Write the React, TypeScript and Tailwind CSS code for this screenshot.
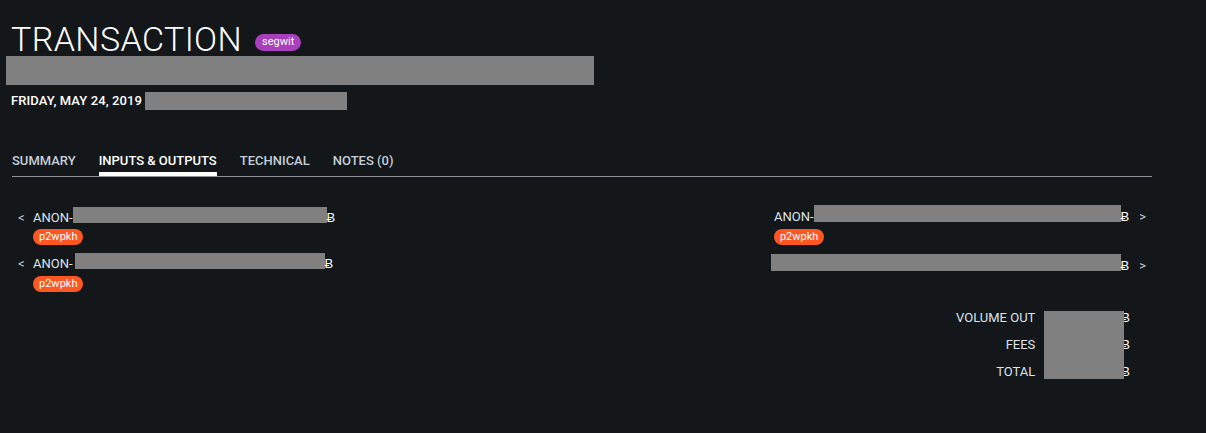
import React from "react";

const font = { fontFamily: "Roboto, 'Liberation Sans', sans-serif" };

function Redacted({ className }: { className: string }) {
  return <div className={`bg-[#808080] shrink-0 ${className}`} />;
}

function Badge({ label, color }: { label: string; color: string }) {
  return (
    <span
      className={`inline-flex h-[16px] items-center rounded-full px-[6px] text-[11px] leading-[16px] text-white ${color}`}
    >
      {label}
    </span>
  );
}

const tabs = ["SUMMARY", "INPUTS & OUTPUTS", "TECHNICAL", "NOTES (0)"];

export default function App() {
  return (
    <div
      className="min-h-[433px] w-full bg-[#13171a] text-[#dde3ea]"
      style={font}
    >
      <div className="w-[1152px] pl-[12px]">
        {/* header */}
        <div className="flex items-start pt-[23px] -ml-px">
          <h1 className="text-[34px] font-light leading-[33px] text-white tracking-[0.4px]">
            TRANSACTION
          </h1>
          <span className="ml-[13px] mt-[11px] inline-flex h-[17px] items-center rounded-full bg-[#a83fbd] px-[7px] text-[11px] text-white">
            segwit
          </span>
        </div>
        <Redacted className="-ml-[6px] h-[29px] w-[588px]" />
        <div className="mt-[7px] flex h-[18px] items-center -ml-px">
          <span className="text-[13px] font-medium tracking-[0.1px] text-white">
            FRIDAY, MAY 24, 2019
          </span>
          <Redacted className="ml-[3px] h-[18px] w-[202px]" />
        </div>

        {/* tabs */}
        <div className="mt-[43px] flex gap-[23px]">
          {tabs.map((t, i) => (
            <div key={t} className="flex flex-col">
              <span
                className={`text-[13px] font-medium leading-[16px] ${
                  i === 1 ? "text-white" : "text-[#c5ced8]"
                }`}
              >
                {t}
              </span>
              <div
                className={`mt-[3px] h-[4px] ${i === 1 ? "bg-white" : ""}`}
              />
            </div>
          ))}
        </div>
        <div className="h-px bg-[#8b9096]" />

        {/* inputs & outputs */}
        <div className="mt-[30px] flex justify-between pl-[6px] pr-[6px] text-[13px] leading-[16px]">
          <div className="flex flex-col">
            <div className="flex items-start">
              <span className="mt-[3px] w-[15px] text-[#c5ced8]">&lt;</span>
              <div className="flex flex-col items-start">
                <div className="flex items-start">
                  <span className="mt-[3px]">ANON-</span>
                  <Redacted className="h-[16px] w-[254px]" />
                  <span className="mt-[3px] text-white">Ƀ</span>
                </div>
                <div className="mt-[3px] flex">
                  <Badge label="p2wpkh" color="bg-[#ff5722]" />
                </div>
              </div>
            </div>
            <div className="mt-[8px] flex items-start">
              <span className="mt-[3px] w-[15px] text-[#c5ced8]">&lt;</span>
              <div className="flex flex-col items-start">
                <div className="flex items-start">
                  <span className="mt-[3px]">ANON-</span>
                  <Redacted className="ml-[2px] h-[16px] w-[250px]" />
                  <span className="mt-[3px] text-white">Ƀ</span>
                </div>
                <div className="mt-[4px] flex">
                  <Badge label="p2wpkh" color="bg-[#ff5722]" />
                </div>
              </div>
            </div>
          </div>

          <div className="-mt-[2px] flex flex-col items-end">
            <div className="flex items-start">
              <div className="flex flex-col items-start">
                <div className="flex items-start">
                  <span className="mt-[4px]">ANON-</span>
                  <Redacted className="h-[17px] w-[307px]" />
                  <span className="mt-[4px] text-white">Ƀ</span>
                </div>
                <div className="mt-[4px] flex">
                  <Badge label="p2wpkh" color="bg-[#ff5722]" />
                </div>
              </div>
              <span className="ml-[10px] mt-[4px] text-[#c5ced8]">&gt;</span>
            </div>
            <div className="mt-[9px] flex items-start">
              <Redacted className="h-[17px] w-[350px]" />
              <span className="mt-[4px] text-white">Ƀ</span>
              <span className="ml-[10px] mt-[4px] text-[#c5ced8]">&gt;</span>
            </div>
          </div>
        </div>

        {/* totals */}
        <div className="mt-[12px] flex justify-end pr-[22px] text-[13px]">
          <div className="grid grid-cols-[auto_89px_auto] grid-rows-[27px_27px_27px] items-center">
            <span className="col-start-1 row-start-1 text-right">VOLUME OUT</span>
            <span className="col-start-1 row-start-2 text-right">FEES</span>
            <span className="col-start-1 row-start-3 text-right">TOTAL</span>
            <Redacted className="relative z-10 col-start-2 row-start-1 row-span-3 ml-[9px] mt-[7px] h-[68px] w-[80px] self-start" />
            <span className="col-start-3 row-start-1 -ml-[3px] text-white">Ƀ</span>
            <span className="col-start-3 row-start-2 -ml-[3px] text-white">Ƀ</span>
            <span className="col-start-3 row-start-3 -ml-[3px] text-white">Ƀ</span>
          </div>
        </div>
      </div>
    </div>
  );
}
